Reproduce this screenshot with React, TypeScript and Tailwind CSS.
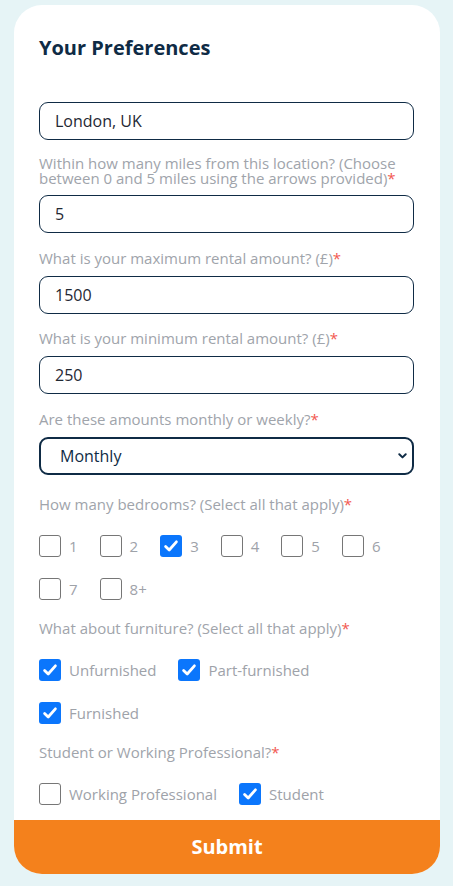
import type { ReactNode } from "react";

const bedrooms = [
  { label: "1", checked: false },
  { label: "2", checked: false },
  { label: "3", checked: true },
  { label: "4", checked: false },
  { label: "5", checked: false },
  { label: "6", checked: false },
  { label: "7", checked: false },
  { label: "8+", checked: false },
];

const furniture = [
  { label: "Unfurnished", checked: true },
  { label: "Part-furnished", checked: true },
  { label: "Furnished", checked: true },
];

const occupation = [
  { label: "Working Professional", checked: false },
  { label: "Student", checked: true },
];

function Label({ children, className }: { children: ReactNode; className: string }) {
  return (
    <p className={`text-[15px] leading-[15px] text-[#a0a4ab] ${className}`}>
      {children}
      <span className="text-[#f2574f]">*</span>
    </p>
  );
}

function TextField({ value, className }: { value: string; className: string }) {
  return (
    <input
      className={`block h-[38px] w-full rounded-[9px] border border-[#0f2b45] bg-white pl-[15px] text-[16px] text-[#1f2833] outline-none ${className}`}
      defaultValue={value}
      type="text"
    />
  );
}

function Box({ checked }: { checked: boolean }) {
  if (checked) {
    return (
      <span className="flex h-[22px] w-[22px] shrink-0 items-center justify-center rounded-[3px] bg-[#0b76fc]">
        <svg width="16" height="16" viewBox="0 0 16 16" fill="none">
          <path
            d="M2.6 8.4 L6.2 12 L13.4 3.8"
            stroke="white"
            strokeWidth="2.8"
            strokeLinecap="round"
            strokeLinejoin="round"
          />
        </svg>
      </span>
    );
  }
  return (
    <span className="h-[22px] w-[22px] shrink-0 rounded-[3px] border-[1.5px] border-[#767676] bg-white" />
  );
}

function CheckGroup({
  items,
  className,
}: {
  items: { label: string; checked: boolean }[];
  className: string;
}) {
  return (
    <div className={`flex flex-wrap gap-x-[22px] gap-y-[21px] ${className}`}>
      {items.map((item) => (
        <label className="flex items-center gap-[8px]" key={item.label}>
          <Box checked={item.checked} />
          <span className="text-[15px] leading-[22px] text-[#9ea2a9]">{item.label}</span>
        </label>
      ))}
    </div>
  );
}

export default function App() {
  return (
    <div
      className="min-h-screen bg-[#e6f4f6] pt-[5px] pb-[12px]"
      style={{ fontFamily: '"Open Sans", "Noto Sans", sans-serif' }}
    >
      <form className="ml-[14px] w-[426px] overflow-hidden rounded-[28px] bg-white">
        <div className="pl-[25px] pr-[26px] pt-[29px]">
          <h2 className="text-[20px] font-bold leading-[28px] text-[#0f2b45]">
            Your Preferences
          </h2>

          <div className="mt-[15px] h-[15px]" />
          <TextField className="mt-[10px]" value="London, UK" />

          <Label className="mt-[16px]">
            Within how many miles from this location? (Choose between 0 and 5 miles using
            the arrows provided)
          </Label>
          <TextField className="mt-[9px]" value="5" />

          <Label className="mt-[18px]">What is your maximum rental amount? (£)</Label>
          <TextField className="mt-[10px]" value="1500" />

          <Label className="mt-[17px]">What is your minimum rental amount? (£)</Label>
          <TextField className="mt-[10px]" value="250" />

          <Label className="mt-[18px]">Are these amounts monthly or weekly?</Label>
          <div className="relative mt-[10px]">
            <select
              className="block h-[38px] w-full appearance-none rounded-[9px] border-2 border-[#0f2b45] bg-white pl-[19px] text-[16px] text-[#0f2b45] outline-none"
              defaultValue="Monthly"
            >
              <option>Monthly</option>
              <option>Weekly</option>
            </select>
            <svg
              className="pointer-events-none absolute right-[7px] top-[16px]"
              width="9"
              height="6"
              viewBox="0 0 9 6"
              fill="none"
            >
              <path
                d="M1.3 1.3 L4.5 4.4 L7.7 1.3"
                stroke="#0f2b45"
                strokeWidth="2"
                strokeLinecap="round"
                strokeLinejoin="round"
              />
            </svg>
          </div>

          <Label className="mt-[22px]">How many bedrooms? (Select all that apply)</Label>
          <CheckGroup className="mt-[23px]" items={bedrooms} />

          <Label className="mt-[21px]">What about furniture? (Select all that apply)</Label>
          <CheckGroup className="mt-[23px]" items={furniture} />

          <Label className="mt-[21px]">Student or Working Professional?</Label>
          <CheckGroup className="mt-[23px]" items={occupation} />
        </div>

        <button
          className="mt-[15px] flex h-[54px] w-full items-center justify-center bg-[#f4811c] text-[20px] font-bold text-white"
          type="button"
        >
          Submit
        </button>
      </form>
    </div>
  );
}
